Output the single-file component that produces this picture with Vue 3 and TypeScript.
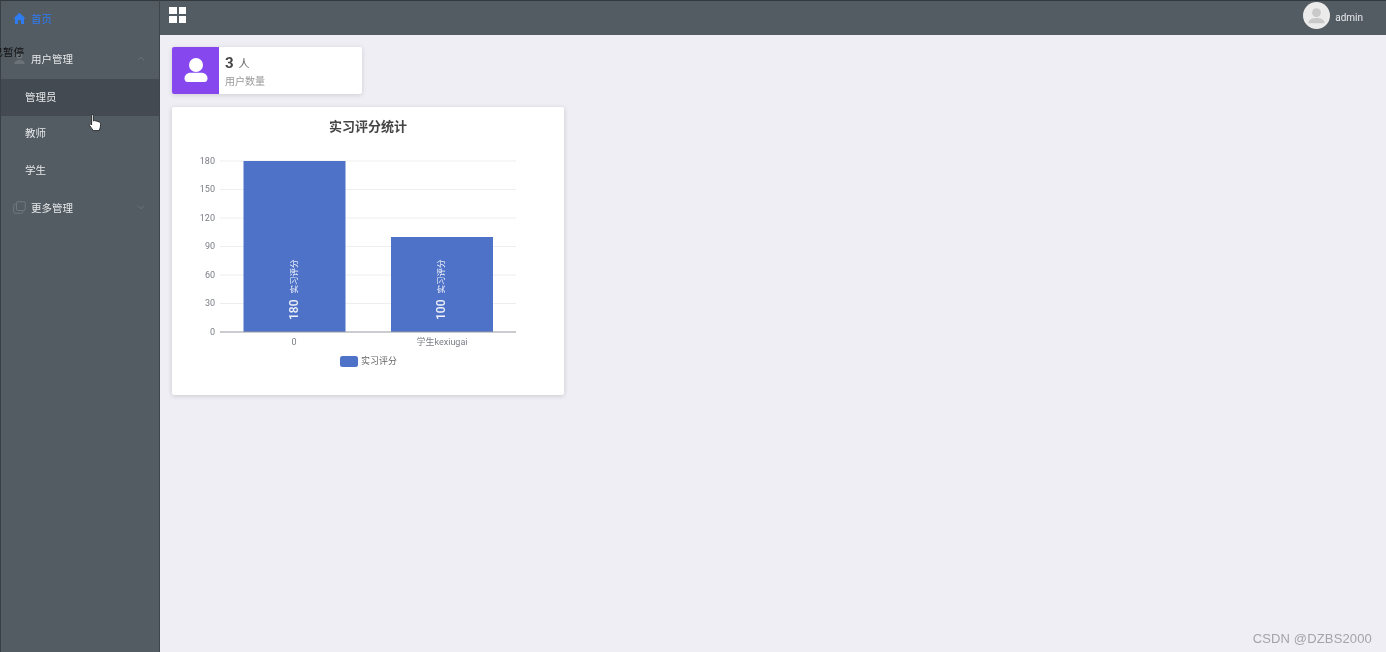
<script setup lang="ts">
interface SubItem {
  name: string
  active?: boolean
}

interface Bar {
  label: string
  value: number
  x: number
  labelX: number
}

const subItems: SubItem[] = [{ name: '管理员', active: true }, { name: '教师' }, { name: '学生' }]

// 图表坐标
const chartTop = 54
const chartBottom = 225
const maxValue = 180
const ticks = [0, 30, 60, 90, 120, 150, 180]

const yOf = (v: number) => chartBottom - ((chartBottom - chartTop) * v) / maxValue

const bars: Bar[] = [
  { label: '0', value: 180, x: 71.5, labelX: 122 },
  { label: '学生kexiugai', value: 100, x: 219, labelX: 270 },
]
</script>

<template>
  <div class="page">
    <aside class="sidebar">
      <div class="menu-item home">
        <svg class="menu-icon" viewBox="0 0 14 14">
          <path d="M7 .8 L13.6 7 L11.9 7 L11.9 13 L8.7 13 L8.7 8.8 L5.3 8.8 L5.3 13 L2.1 13 L2.1 7 L.4 7 Z" fill="#2f7cf0" />
        </svg>
        <span>首页</span>
      </div>
      <div class="menu-item">
        <svg class="menu-icon" viewBox="0 0 14 14">
          <circle cx="7" cy="4.2" r="3.2" fill="#6b7278" />
          <path d="M1.5 13 C1.5 9.6 4 8.6 7 8.6 C10 8.6 12.5 9.6 12.5 13 Z" fill="#6b7278" />
        </svg>
        <span>用户管理</span>
        <svg class="chevron" viewBox="0 0 10 6">
          <path d="M1 5 L5 1.5 L9 5" fill="none" stroke="#6f777d" stroke-width="1" />
        </svg>
      </div>
      <div v-for="item in subItems" :key="item.name" class="sub-item" :class="{ active: item.active }">
        {{ item.name }}
      </div>
      <div class="menu-item">
        <svg class="menu-icon" viewBox="0 0 14 14">
          <rect x="3.8" y=".8" width="9.4" height="9.4" rx="1.5" fill="none" stroke="#727a80" />
          <path d="M3 3.4 H2.2 A1.4 1.4 0 0 0 .8 4.8 V11.8 A1.4 1.4 0 0 0 2.2 13.2 H9.2 A1.4 1.4 0 0 0 10.6 11.8 V11" fill="none" stroke="#727a80" />
        </svg>
        <span>更多管理</span>
        <svg class="chevron" viewBox="0 0 10 6">
          <path d="M1 1 L5 4.5 L9 1" fill="none" stroke="#6f777d" stroke-width="1" />
        </svg>
      </div>
    </aside>

    <div class="right">
      <header class="topbar">
        <div class="grid-icon">
          <i v-for="n in 4" :key="n"></i>
        </div>
        <div class="user">
          <svg class="avatar" viewBox="0 0 28 28">
            <circle cx="14" cy="14" r="14" fill="#ebebeb" />
            <circle cx="14" cy="11" r="4.6" fill="#c9c9c9" />
            <path d="M5.5 22 C6 17.5 10 16.6 14 16.6 C18 16.6 22 17.5 22.5 22 Z" fill="#c9c9c9" />
          </svg>
          <span>admin</span>
        </div>
      </header>

      <main class="content">
        <div class="stat-card">
          <div class="stat-icon">
            <svg viewBox="0 0 24 24" width="24" height="24">
              <circle cx="12" cy="7" r="7" fill="#fff" />
              <path d="M.5 20.5 C.5 16.5 4 14.8 7 14.8 H17 C20 14.8 23.5 16.5 23.5 20.5 C23.5 23 22 24 20.5 24 H3.5 C2 24 .5 23 .5 20.5 Z" fill="#fff" />
            </svg>
          </div>
          <div class="stat-text">
            <div class="stat-value"><b>3</b><span>人</span></div>
            <div class="stat-label">用户数量</div>
          </div>
        </div>

        <section class="chart-card">
          <h3>实习评分统计</h3>
          <svg class="chart" width="392" height="288" viewBox="0 0 392 288">
            <line
              v-for="t in ticks.slice(1)"
              :key="t"
              x1="48"
              x2="344"
              :y1="yOf(t)"
              :y2="yOf(t)"
              stroke="#eceef2"
            />
            <text v-for="t in ticks" :key="'t' + t" x="43" :y="yOf(t) + 2.5" text-anchor="end" class="axis">{{ t }}</text>

            <g v-for="b in bars" :key="b.label">
              <rect :x="b.x" :y="yOf(b.value)" width="102" :height="chartBottom - yOf(b.value)" fill="#4f72c9" />
              <text :x="b.labelX" y="238" class="axis" text-anchor="middle">{{ b.label }}</text>
              <text
                class="bar-label"
                :transform="`translate(${b.x + 54} 213) rotate(-90)`"
              ><tspan class="bar-num">{{ b.value }}</tspan><tspan dx="6" dy="-1">实习评分</tspan></text>
            </g>

            <line x1="48" x2="344" :y1="chartBottom" :y2="chartBottom" stroke="#96999f" />

            <rect x="168" y="249" width="18" height="11" rx="2.5" fill="#4f72c9" />
            <text x="189" y="256.5" class="legend">实习评分</text>
          </svg>
        </section>
      </main>
    </div>

    <!-- 页面上层的提示文字、鼠标和水印 -->
    <div class="paused">已暂停</div>
    <svg class="cursor" width="14" height="18" viewBox="0 0 14 18">
      <path d="M3.6 1.4 C3.6 .4 5.4 .4 5.4 1.4 V7 L6.4 6.6 L8.2 7 L9.8 7.4 L11.6 8.2 C12.6 8.8 12.6 10 12.6 11 C12.6 13 12 14.4 11.2 16.6 H5.2 C4.4 15 2.8 13.4 1.4 11.2 C.8 10.2 1.8 9.4 2.8 10.2 L3.6 11 Z" fill="#fff" stroke="#222" stroke-width=".9" />
    </svg>
    <div class="watermark">CSDN @DZBS2000</div>
  </div>
</template>

<style>
html,
body {
  margin: 0;
  overflow: hidden;
}
</style>

<style scoped>
.page {
  position: relative;
  display: flex;
  width: 1386px;
  height: 652px;
  overflow: hidden;
  background: #eeeef4;
  font-family: Roboto, 'Noto Sans CJK SC', sans-serif;
  filter: blur(0.3px);
}

/* 左侧菜单 */
.sidebar {
  box-sizing: border-box;
  flex: 0 0 160px;
  border-left: 1px solid #3a3f44;
  border-top: 1px solid #33383c;
  border-right: 1px solid #3f454a;
  background: #535b63;
  color: #e6e8ea;
  font-size: 10.5px;
}

.menu-item {
  box-sizing: border-box;
  display: flex;
  align-items: center;
  height: 40px;
  padding: 0 14px 2px 12px;
}

.menu-item.home {
  height: 38px;
  padding-bottom: 4px;
  color: #2f7cf0;
}

.menu-icon {
  width: 13px;
  height: 13px;
  margin-right: 5px;
}

.chevron {
  width: 8px;
  height: 5px;
  margin-left: auto;
}

.sub-item {
  box-sizing: border-box;
  display: flex;
  align-items: center;
  height: 36.5px;
  padding: 0 0 2px 24px;
}

.sub-item.active {
  background: #434a51;
}

/* 顶栏 */
.right {
  flex: 1;
  display: flex;
  flex-direction: column;
  min-width: 0;
}

.topbar {
  box-sizing: border-box;
  display: flex;
  align-items: center;
  justify-content: space-between;
  height: 35px;
  padding: 0 23px 5px 9px;
  border-top: 1px solid #33383c;
  background: #535b63;
}

.grid-icon {
  display: grid;
  grid-template-columns: 7.5px 7.5px;
  grid-auto-rows: 7px;
  gap: 2px;
  margin-top: -2px;
}

.grid-icon i {
  background: #fff;
}

.user {
  display: flex;
  align-items: center;
  gap: 5px;
  color: #e8ebee;
  font-size: 10px;
}

.user span {
  padding-top: 3px;
}

.avatar {
  width: 27px;
  height: 27px;
}

/* 内容区 */
.content {
  flex: 1;
  padding: 12px;
}

.stat-card {
  display: flex;
  width: 190px;
  height: 47px;
  border-radius: 2px;
  overflow: hidden;
  background: #fff;
  box-shadow: 0 1px 5px rgba(0, 0, 0, 0.14);
}

.stat-icon {
  display: flex;
  align-items: center;
  justify-content: center;
  flex: 0 0 47px;
  padding-bottom: 2px;
  box-sizing: border-box;
  background: #8647ee;
}

.stat-text {
  padding: 7px 0 0 6px;
}

.stat-value {
  display: flex;
  align-items: baseline;
  gap: 5px;
  height: 19px;
  color: #444;
  font-size: 11px;
}

.stat-value b {
  font-size: 15px;
}

.stat-value span {
  color: #666;
}

.stat-label {
  color: #999;
  font-size: 10px;
}

.chart-card {
  position: relative;
  width: 392px;
  height: 288px;
  margin-top: 13px;
  border-radius: 2px;
  background: #fff;
  box-shadow: 0 1px 5px rgba(0, 0, 0, 0.16);
}

.chart-card h3 {
  position: absolute;
  top: 11px;
  left: 0;
  width: 100%;
  margin: 0;
  color: #444;
  font-size: 13px;
  line-height: 18px;
  text-align: center;
}

.chart {
  display: block;
}

.axis {
  fill: #7a7d85;
  font-size: 9px;
}

.legend {
  fill: #666;
  font-size: 9px;
}

.bar-label {
  fill: #eef1f8;
  font-size: 8.5px;
}

.bar-num {
  font-size: 12px;
  font-weight: 500;
}

/* 覆盖层 */
.paused {
  position: absolute;
  top: 46px;
  right: calc(100% - 24px);
  color: #111;
  font-size: 10.5px;
  line-height: 14px;
  white-space: nowrap;
}

.cursor {
  position: absolute;
  top: 114px;
  left: 88px;
}

.watermark {
  position: absolute;
  right: 14px;
  bottom: 6px;
  color: #a4a4a8;
  font-family: 'Liberation Sans', sans-serif;
  font-size: 13px;
  letter-spacing: 0.15px;
}
</style>
